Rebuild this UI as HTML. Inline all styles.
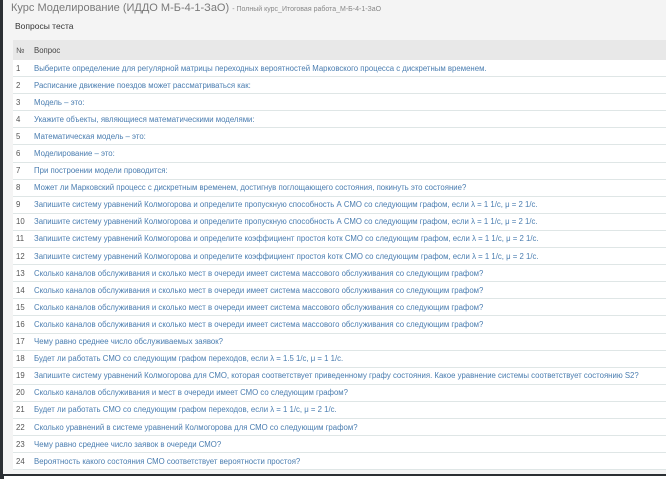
<!DOCTYPE html><html><head><meta charset="utf-8"><style>
body{margin:0;width:666px;height:479px;overflow:hidden;background:#f4f4f4;font-family:"Liberation Sans","Noto Sans CJK SC",sans-serif;position:relative}
.lb{position:absolute;left:0;top:0;width:3px;height:479px;background:#2b2f33}
.t{position:absolute;left:11px;top:2px;font-size:11px;color:#7a7a7a;white-space:nowrap}
.t small{font-size:7px;color:#888}
.h{position:absolute;left:15px;top:21px;font-size:8.5px;color:#333}
table{position:absolute;left:13px;top:40px;width:653px;border-collapse:collapse;font-size:7.8px}
th{background:#e8e8e8;height:20px;text-align:left;font-weight:normal;color:#444;padding:0}
td{background:#fff;height:16.1px;border-bottom:1px solid #dfe6e6;padding:0;color:#4a7db0;white-space:nowrap}
td:first-child,th:first-child{width:18px;padding-left:3px;color:#555}
.bot{position:absolute;left:0;top:474px;width:666px;height:5px;background:#2b2f33}
.bot div{position:absolute;left:4px;top:2px;right:0;bottom:0;background:#fff}
</style></head><body>
<div class="lb"></div>
<div class="t">Курс Моделирование (ИДДО М-Б-4-1-ЗаО) <small>- Полный курс_Итоговая работа_М-Б-4-1-ЗаО</small></div>
<div class="h">Вопросы теста</div>
<table>
<tr><th>№</th><th>Вопрос</th></tr>
<tr><td>1</td><td>Выберите определение для регулярной матрицы переходных вероятностей Марковского процесса с дискретным временем.</td></tr>
<tr><td>2</td><td>Расписание движение поездов может рассматриваться как:</td></tr>
<tr><td>3</td><td>Модель – это:</td></tr>
<tr><td>4</td><td>Укажите объекты, являющиеся математическими моделями:</td></tr>
<tr><td>5</td><td>Математическая модель – это:</td></tr>
<tr><td>6</td><td>Моделирование – это:</td></tr>
<tr><td>7</td><td>При построении модели проводится:</td></tr>
<tr><td>8</td><td>Может ли Марковский процесс с дискретным временем, достигнув поглощающего состояния, покинуть это состояние?</td></tr>
<tr><td>9</td><td>Запишите систему уравнений Колмогорова и определите пропускную способность А СМО со следующим графом, если λ = 1 1/c, μ = 2 1/c.</td></tr>
<tr><td>10</td><td>Запишите систему уравнений Колмогорова и определите пропускную способность А СМО со следующим графом, если λ = 1 1/c, μ = 2 1/c.</td></tr>
<tr><td>11</td><td>Запишите систему уравнений Колмогорова и определите коэффициент простоя kотк СМО со следующим графом, если λ = 1 1/c, μ = 2 1/c.</td></tr>
<tr><td>12</td><td>Запишите систему уравнений Колмогорова и определите коэффициент простоя kотк СМО со следующим графом, если λ = 1 1/c, μ = 2 1/c.</td></tr>
<tr><td>13</td><td>Сколько каналов обслуживания и сколько мест в очереди имеет система массового обслуживания со следующим графом?</td></tr>
<tr><td>14</td><td>Сколько каналов обслуживания и сколько мест в очереди имеет система массового обслуживания со следующим графом?</td></tr>
<tr><td>15</td><td>Сколько каналов обслуживания и сколько мест в очереди имеет система массового обслуживания со следующим графом?</td></tr>
<tr><td>16</td><td>Сколько каналов обслуживания и сколько мест в очереди имеет система массового обслуживания со следующим графом?</td></tr>
<tr><td>17</td><td>Чему равно среднее число обслуживаемых заявок?</td></tr>
<tr><td>18</td><td>Будет ли работать СМО со следующим графом переходов, если λ = 1.5 1/c, μ = 1 1/c.</td></tr>
<tr><td>19</td><td>Запишите систему уравнений Колмогорова для СМО, которая соответствует приведенному графу состояния. Какое уравнение системы соответствует состоянию S2?</td></tr>
<tr><td>20</td><td>Сколько каналов обслуживания и мест в очереди имеет СМО со следующим графом?</td></tr>
<tr><td>21</td><td>Будет ли работать СМО со следующим графом переходов, если λ = 1 1/c, μ = 2 1/c.</td></tr>
<tr><td>22</td><td>Сколько уравнений в системе уравнений Колмогорова для СМО со следующим графом?</td></tr>
<tr><td>23</td><td>Чему равно среднее число заявок в очереди СМО?</td></tr>
<tr><td>24</td><td>Вероятность какого состояния СМО соответствует вероятности простоя?</td></tr>
</table>
<div class="bot"><div></div></div>
</body></html>
